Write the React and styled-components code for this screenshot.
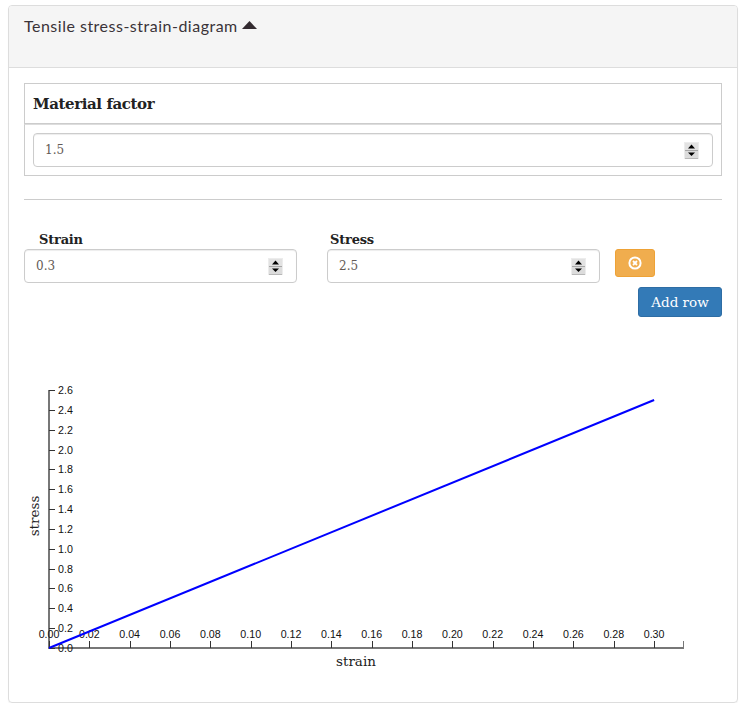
import React from 'react';
import styled, { createGlobalStyle } from 'styled-components';

const serif = '"DejaVu Serif", "Liberation Serif", serif';

const GlobalStyle = createGlobalStyle`
  html, body { margin: 0; padding: 0; background: #fff; }
  body { font-family: ${serif}; color: #333; }
`;

const Panel = styled.div`
  box-sizing: border-box;
  width: 730px;
  height: 698px;
  margin: 5px 0 0 8px;
  border: 1px solid #ddd;
  border-radius: 4px;
  box-shadow: 0 1px 1px rgba(0, 0, 0, 0.05);
  overflow: hidden;
`;

const PanelHeading = styled.div`
  box-sizing: border-box;
  height: 62px;
  padding: 10px 15px;
  background: #f5f5f5;
  border-bottom: 1px solid #ddd;
  display: flex;
  align-items: flex-start;
  gap: 4px;
  font-family: Lato, "Open Sans", sans-serif;
  font-size: 16px;
  line-height: 20px;
  letter-spacing: 0.5px;
  color: #3a3338;
`;

const Caret = styled.svg`
  margin-top: 5px;
`;

const PanelBody = styled.div`
  padding: 15px 15px 0;
`;

const FactorTitle = styled.div`
  box-sizing: border-box;
  height: 41px;
  padding: 0 8px;
  border: 1px solid #ccc;
  display: flex;
  align-items: center;
  font-size: 15px;
  font-weight: 700;
  color: #222;
  letter-spacing: -0.4px;
`;

const FactorBox = styled.div`
  padding: 8px;
  border: 1px solid #ccc;
  border-top-color: #ddd;
`;

const InputShell = styled.div`
  box-sizing: border-box;
  height: 34px;
  padding: 0 13px 0 11px;
  border: 1px solid #ccc;
  border-radius: 4px;
  box-shadow: inset 0 1px 1px rgba(0, 0, 0, 0.075);
  background: #fff;
  display: flex;
  align-items: center;
`;

const NumberInput = styled.input`
  flex: 1;
  min-width: 0;
  padding: 0;
  border: 0;
  background: transparent;
  font-family: ${serif};
  font-size: 12px;
  color: #635a55;
  outline: none;

  &::-webkit-inner-spin-button {
    display: none;
  }
`;

const Spinner = styled.svg`
  flex: none;
  display: block;
`;

const SpinnerIcon = () => (
  <Spinner width="15" height="17" viewBox="0 0 15 17">
    <rect width="15" height="17" fill="#ececec" />
    <rect x="1" y="1" width="13" height="7" fill="#e2e2e2" />
    <rect x="1" y="8" width="13" height="1" fill="#a8a8a8" />
    <rect x="1" y="9" width="13" height="7" fill="#dcdcdc" />
    <rect x="1" y="16" width="13" height="1" fill="#b8b8b8" />
    <polygon points="7.5,2.5 11,6.5 4,6.5" fill="#000" />
    <polygon points="7.5,14 11,10.5 4,10.5" fill="#000" />
  </Spinner>
);

const NumberField = ({ value }) => (
  <InputShell>
    <NumberInput type="number" defaultValue={value} step="0.1" />
    <SpinnerIcon />
  </InputShell>
);

const Divider = styled.hr`
  margin: 23px 0 0;
  border: 0;
  border-top: 1px solid #ccc;
`;

const RowGrid = styled.div`
  display: grid;
  grid-template-columns: 273px 273px 40px;
  column-gap: 30px;
  margin-top: 30px;
`;

const Field = styled.div`
  display: flex;
  flex-direction: column;
`;

const FieldLabel = styled.label`
  height: 19px;
  padding-left: ${(props) => props.$indent}px;
  font-size: 13px;
  font-weight: 700;
  line-height: 19px;
  color: #222;
  letter-spacing: -0.2px;
`;

const RemoveButton = styled.button`
  box-sizing: border-box;
  width: 40px;
  height: 28px;
  margin: 19px 0 0 -15px;
  padding: 0;
  border: 1px solid #eea236;
  border-radius: 3px;
  background: #f0ad4e;
  color: #fff;
  display: flex;
  align-items: center;
  justify-content: center;
`;

const ActionRow = styled.div`
  display: flex;
  justify-content: flex-end;
  margin-top: 4px;
`;

const AddButton = styled.button`
  box-sizing: border-box;
  width: 84px;
  height: 30px;
  padding: 0;
  border: 1px solid #2e6da4;
  border-radius: 3px;
  background: #337ab7;
  color: #fff;
  font-family: ${serif};
  font-size: 13.5px;
`;

const ChartWrap = styled.div`
  margin: 67px 0 0 -15px;
`;

const Chart = styled.svg`
  display: block;
`;

const TickText = styled.text`
  font-family: "Liberation Sans", Arial, sans-serif;
  font-size: 10.67px;
  fill: #111;
`;

const AxisTitle = styled.text`
  font-family: ${serif};
  font-size: 13.5px;
  fill: #222;
`;

// svg origin sits at page x=9, y=384
const ox = 40;
const oy = 264;
const xScale = (v) => ox + v * 2017;
const yScale = (v) => oy - v * 99.2;
const xTicks = Array.from({ length: 16 }, (_, i) => i * 0.02);
const yTicks = Array.from({ length: 14 }, (_, i) => i * 0.2);

const StressChart = () => (
  <Chart width="728" height="300" viewBox="0 0 728 300">
    <g stroke="#777" strokeWidth="2" fill="none">
      <line x1={ox} y1={yScale(2.6)} x2={ox} y2={oy + 1} />
      <line x1={ox} y1={oy} x2="675" y2={oy} />
    </g>
    <g stroke="#333" strokeWidth="1">
      {xTicks.map((v) => (
        <line key={v} x1={Math.round(xScale(v)) + 0.5} y1={oy - 7} x2={Math.round(xScale(v)) + 0.5} y2={oy} />
      ))}
      <line x1="674.5" y1={oy - 7} x2="674.5" y2={oy} stroke="#777" />
      {yTicks.map((v) => (
        <line key={v} x1={ox} y1={Math.round(yScale(v)) + 0.5} x2={ox + 6} y2={Math.round(yScale(v)) + 0.5} />
      ))}
    </g>
    {xTicks.map((v) => (
      <TickText key={v} x={xScale(v)} y={oy - 10} textAnchor="middle">
        {v.toFixed(2)}
      </TickText>
    ))}
    {yTicks.map((v) => (
      <TickText key={v} x={ox + 9} y={yScale(v) + 4}>
        {v.toFixed(1)}
      </TickText>
    ))}
    <line x1={ox} y1={oy} x2={xScale(0.3)} y2={yScale(2.5)} stroke="#0000ff" strokeWidth="2" />
    <AxisTitle x="347" y={oy + 18} textAnchor="middle">strain</AxisTitle>
    <AxisTitle transform={`translate(30 ${oy - 132}) rotate(-90)`} textAnchor="middle">stress</AxisTitle>
  </Chart>
);

const App = () => (
  <>
    <GlobalStyle />
    <Panel>
      <PanelHeading>
        Tensile stress-strain-diagram
        <Caret width="15" height="8" viewBox="0 0 15 8">
          <polygon points="7.5,0 15,8 0,8" fill="#332b30" />
        </Caret>
      </PanelHeading>
      <PanelBody>
        <FactorTitle>Material factor</FactorTitle>
        <FactorBox>
          <NumberField value="1.5" />
        </FactorBox>
        <Divider />
        <RowGrid>
          <Field>
            <FieldLabel $indent={15}>Strain</FieldLabel>
            <NumberField value="0.3" />
          </Field>
          <Field>
            <FieldLabel $indent={3}>Stress</FieldLabel>
            <NumberField value="2.5" />
          </Field>
          <RemoveButton aria-label="Remove row">
            <svg width="14" height="14" viewBox="0 0 14 14" fill="none" stroke="#fff">
              <circle cx="7" cy="7" r="5.6" strokeWidth="2" />
              <path d="M5 5l4 4M9 5l-4 4" strokeWidth="1.8" />
            </svg>
          </RemoveButton>
        </RowGrid>
        <ActionRow>
          <AddButton>Add row</AddButton>
        </ActionRow>
        <ChartWrap>
          <StressChart />
        </ChartWrap>
      </PanelBody>
    </Panel>
  </>
);

export default App;
